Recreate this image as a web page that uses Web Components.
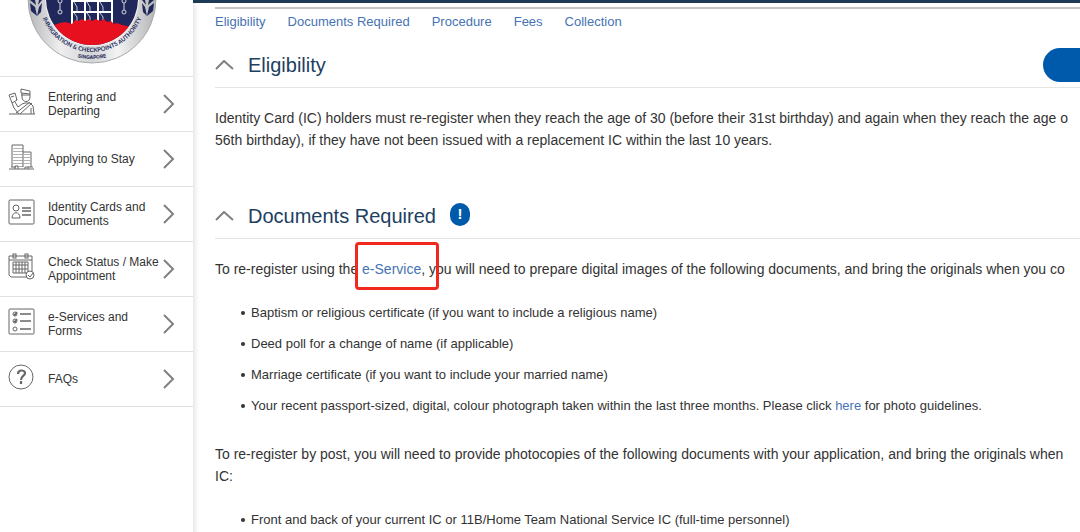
<!DOCTYPE html>
<html lang="en">
<head>
<meta charset="utf-8">
<meta name="viewport" content="width=device-width, initial-scale=1">
<title>Identity Card Re-registration</title>
<style>
    body {
        margin: 0;
        background: #fff;
        color: #333;
        font: 14px/22px "Liberation Sans", Arial, sans-serif;
    }

    p {
        margin: 0;
    }

    a {
        color: #4673b3;
        text-decoration: none;
    }

    ul {
        margin: 17px 0 22px;
        padding-left: 26px;
        font-size: 13px;
        line-height: 31px;
        list-style: none;
    }

    ul:last-child {
        margin-bottom: 0;
    }

    li {
        display: flex;
        align-items: center;
        gap: 6px;
    }

    li::before {
        content: "";
        width: 4px;
        height: 4px;
        border-radius: 50%;
        background: #333;
    }
</style>
</head>
<body>

<app-shell>
    <side-menu slot="side">
        <ica-crest slot="logo"></ica-crest>
        <menu-item icon="officer">Entering and Departing</menu-item>
        <menu-item icon="buildings">Applying to Stay</menu-item>
        <menu-item icon="card">Identity Cards and Documents</menu-item>
        <menu-item icon="calendar">Check Status / Make Appointment</menu-item>
        <menu-item icon="forms">e-Services and Forms</menu-item>
        <menu-item icon="question">FAQs</menu-item>
    </side-menu>

    <section-nav></section-nav>

    <info-section id="eligibility" heading="Eligibility">
        <pill-button slot="action"></pill-button>
        <p>Identity Card (IC) holders must re-register when they reach the age of 30 (before their 31st birthday) and again when they reach the age o<br>56th birthday), if they have not been issued with a replacement IC within the last 10 years.</p>
    </info-section>

    <info-section id="documents" heading="Documents Required">
        <alert-badge slot="badge"></alert-badge>
        <p>To re-register using the <mark-box><a href="#e-service">e-Service</a>,</mark-box> you will need to prepare digital images of the following documents, and bring the originals when you co</p>
        <ul>
            <li><span>Baptism or religious certificate (if you want to include a religious name)</span></li>
            <li><span>Deed poll for a change of name (if applicable)</span></li>
            <li><span>Marriage certificate (if you want to include your married name)</span></li>
            <li><span>Your recent passport-sized, digital, colour photograph taken within the last three months. Please click <a href="#photo">here</a> for photo guidelines.</span></li>
        </ul>
        <p>To re-register by post, you will need to provide photocopies of the following documents with your application, and bring the originals when<br>IC:</p>
        <ul>
            <li><span>Front and back of your current IC or 11B/Home Team National Service IC (full-time personnel)</span></li>
        </ul>
    </info-section>
</app-shell>

<script>
const ICONS = {
    officer: `
        <path d="M1 7l6-2 2 7-5 3z M9 11l-1 1 M4 15l2 5 5 6 M7 14l3 5 4-3 3-1h5l3 3 1 8 M24 15l-12 11 M22 14l-14 11 M1 26h26 M23 20v6"/>
        <path d="M13 1l9 2v3l-9-1z M14 5v4c0 6 8 6 8 0V6 M13 7h9 M3 9l3-1"/>`,
    buildings: `
        <path d="M1 26h25 M4 24V2h11v22 M15 9h8v15 M7 26v-3h3v3 M17 26v-2h3v2 M3 24h5 M20 24h5"/>
        <path stroke-dasharray="1 2" d="M6 5v17 M8 5v17 M10 5v19 M12 5v19 M14 5v19 M17 11v12 M19 11v12 M21 11v12"/>`,
    card: `
        <rect x="1" y="2" width="25" height="24" rx="1"/>
        <circle cx="8" cy="10" r="3"/>
        <path d="M4 20c0-7 8-7 8 0z"/>
        <path stroke-width="1.5" d="M14 10h9 M14 13h9 M14 17h9"/>`,
    calendar: `
        <path d="M20 24H3L1 22V3h23v15 M1 7h23"/>
        <rect x="5" y="1" width="3" height="4"/><rect x="17" y="1" width="3" height="4"/>
        <path d="M5 9h15v11H5z M8 9v11 M11 9v11 M14 9v11 M17 9v11 M5 12h15 M5 16h15"/>
        <circle cx="22" cy="22" r="4" fill="#fff"/>
        <path d="M20 22l2 2 3-4"/>`,
    forms: `
        <rect x="1" y="1" width="25" height="25" rx="1"/>
        <circle cx="7" cy="6" r="2"/><circle cx="7" cy="13" r="2"/><circle cx="7" cy="21" r="2"/>
        <path stroke-width="1.5" d="M12 6h11 M12 13h11 M12 21h11 M6 6l1 1 2-3 M6 13l1 1 2-3"/>`,
    question: `
        <circle cx="13" cy="14" r="12"/>
        <path stroke-width="2.2" d="M10 11c0-5 7-4 7-1 0 3-4 3-4 7 M13 18v3"/>`
};

class AppShell extends HTMLElement
{
    constructor()
    {
        super();

        this.attachShadow({mode: 'open'}).innerHTML = `
        <style>
            :host {
                display: grid;
                grid-template-columns: 193px minmax(0, 1fr);
                min-height: 100vh;
            }

            main {
                border-top: 3px solid #1d3b56;
                padding: 4px 0 0 22px;
            }
        </style>

        <slot name="side"></slot>
        <main><slot></slot></main>
        `;
    }
}

class SideMenu extends HTMLElement
{
    constructor()
    {
        super();

        this.attachShadow({mode: 'open'}).innerHTML = `
        <style>
            :host {
                display: block;
                box-shadow: 1px 3px 6px rgba(0, 0, 0, 0.15);
            }

            .logo {
                display: flex;
                justify-content: center;
                height: 76px;
                padding-right: 9px;
                border-bottom: 1px solid #e2e2e2;
            }
        </style>

        <div class="logo"><slot name="logo"></slot></div>
        <nav aria-label="Main"><slot></slot></nav>
        `;
    }
}

class MenuItem extends HTMLElement
{
    connectedCallback()
    {
        this.attachShadow({mode: 'open'}).innerHTML = `
        <style>
            :host {
                display: block;
                border-bottom: 1px solid #e2e2e2;
            }

            a {
                display: grid;
                grid-template-columns: 28px 1fr 12px;
                column-gap: 12px;
                align-items: center;
                height: 54px;
                padding: 0 18px 0 8px;
                color: #333;
                font-size: 12px;
                line-height: 14px;
                text-decoration: none;
            }

            /* long labels may run into the gap before the arrow */
            span {
                margin-right: -12px;
            }

            svg {
                fill: none;
                stroke: #666;
            }

            .icon {
                margin-bottom: 4px;
            }

            .arrow {
                stroke: #808080;
                stroke-width: 2;
            }
        </style>

        <a href="#">
            <svg class="icon" width="28" height="28" viewBox="0 0 28 28" aria-hidden="true">${ICONS[this.getAttribute('icon')]}</svg>
            <span><slot></slot></span>
            <svg class="arrow" width="12" height="20" viewBox="0 0 12 20" aria-hidden="true"><path d="M1 1l9 9-9 9"/></svg>
        </a>
        `;
    }
}

class IcaCrest extends HTMLElement
{
    constructor()
    {
        super();

        this.attachShadow({mode: 'open'}).innerHTML = `
        <style>
            :host {
                display: block;
            }

            text {
                font: bold 6px Lato, "Liberation Sans", sans-serif;
                fill: #242a5c;
                text-anchor: middle;
            }

            .country {
                font: bold 5px Inter, "Liberation Sans", sans-serif;
            }
        </style>

        <svg width="132" height="66" viewBox="26 0 132 66" role="img" aria-label="Immigration and Checkpoints Authority">
            <defs>
                <linearGradient id="metal">
                    <stop offset="0" stop-color="#b5b6b8"/>
                    <stop offset="0.25" stop-color="#eeeeef"/>
                    <stop offset="0.5" stop-color="#d3d4d6"/>
                    <stop offset="0.7" stop-color="#f3f3f3"/>
                    <stop offset="1" stop-color="#b3b4b6"/>
                </linearGradient>
                <clipPath id="disc"><circle cx="92" cy="-1" r="46"/></clipPath>
                <path id="outer" d="M39 -1a53 53 0 0 0 106 0"/>
                <path id="inner" d="M32 -1a60 60 0 0 0 120 0"/>
            </defs>
            <circle cx="92" cy="-1" r="64" fill="url(#metal)" stroke="#a8a9ac"/>
            <circle cx="92" cy="-1" r="47" fill="#f2f2f3"/>
            <g clip-path="url(#disc)">
                <rect x="45" y="-1" width="94" height="48" fill="#20285b"/>
                <path fill="none" stroke="#fff" stroke-width="2" d="M71 1h42 M71 12h42 M72 0v25 M85 0v22 M98 0v22 M112 0v25"/>
                <path fill="none" stroke="#c5c8da" d="M74 2l3 5v4 M87 2l3 5v4 M100 2l3 5v4 M74 13l3 4v4 M87 13l3 4v4 M100 13l3 4v4"/>
                <path fill="#e6101f" d="M40 50V30l17-6 3-1 5-1 4 1 3 1 3-4 3 1 4-2 3 2 4-2 3 2 4-2 4 2 4-2 3 3 4-1 3 3 3-1 5 2 5 1 15 7v20z"/>
                <g fill="none" stroke="#d5d7e3">
                    <circle cx="60" cy="1" r="2"/><path d="M60 3v7"/><circle cx="60" cy="12" r="2"/>
                    <circle cx="124" cy="1" r="2"/><path d="M124 3v7"/><circle cx="124" cy="12" r="2"/>
                </g>
            </g>
            <g fill="#20285b">
                <path d="M30 3l5 4 2 9-6-5z M42 3l-3 4-2 9 4-4z M30 0h5l1 5z M38 5l1-5h3z"/>
                <path d="M154 3l-5 4-2 9 6-5z M142 3l3 4 2 9-4-4z M154 0h-5l-1 5z M146 5l-1-5h-3z"/>
            </g>
            <text><textPath href="#outer" startOffset="50%">IMMIGRATION &amp; CHECKPOINTS AUTHORITY</textPath></text>
            <text class="country"><textPath href="#inner" startOffset="50%">SINGAPORE</textPath></text>
        </svg>
        `;
    }
}

class SectionNav extends HTMLElement
{
    constructor()
    {
        super();

        this.attachShadow({mode: 'open'}).innerHTML = `
        <style>
            :host {
                display: block;
                border-top: 2px solid #c4c4c4;
            }

            nav {
                display: flex;
                gap: 22px;
                padding: 5px 0 13px;
                font-size: 13px;
                line-height: 16px;
            }

            a {
                color: #4673b3;
                text-decoration: none;
            }
        </style>

        <nav aria-label="On this page">
            <a href="#eligibility">Eligibility</a>
            <a href="#documents">Documents Required</a>
            <a href="#procedure">Procedure</a>
            <a href="#fees">Fees</a>
            <a href="#collection">Collection</a>
        </nav>
        `;
    }
}

class InfoSection extends HTMLElement
{
    connectedCallback()
    {
        this.attachShadow({mode: 'open'}).innerHTML = `
        <style>
            :host {
                display: block;
            }

            :host(:not(:last-child)) {
                margin-bottom: 43px;
            }

            header {
                display: flex;
                align-items: center;
                height: 44px;
                margin-bottom: 19px;
                border-bottom: 1px solid #e4e4e4;
            }

            h2 {
                margin: 0;
                font-size: 20px;
                font-weight: normal;
            }

            button {
                display: flex;
                align-items: center;
                gap: 14px;
                padding: 0;
                border: 0;
                background: none;
                color: #21405f;
                font: inherit;
                line-height: 24px;
            }

            svg {
                fill: none;
                stroke: #808080;
                stroke-width: 2;
            }

            slot[name="badge"] {
                display: block;
                margin-left: 14px;
            }

            slot[name="action"] {
                display: block;
                margin-left: auto;
            }
        </style>

        <header>
            <h2>
                <button type="button" aria-expanded="true">
                    <svg width="19" height="10" viewBox="0 0 19 10" aria-hidden="true"><path d="M1 9l8-8 9 8"/></svg>
                    ${this.getAttribute('heading')}
                </button>
            </h2>
            <slot name="badge"></slot>
            <slot name="action"></slot>
        </header>
        <slot></slot>
        `;
    }
}

class AlertBadge extends HTMLElement
{
    constructor()
    {
        super();

        this.attachShadow({mode: 'open'}).innerHTML = `
        <style>
            :host {
                display: flex;
                justify-content: center;
                width: 20px;
                height: 23px;
                margin-bottom: 4px;
                border-radius: 10px;
                background: #005aab;
                color: #fff;
                font-size: 15px;
                font-weight: bold;
                line-height: 22px;
            }
        </style>
        !
        `;
    }
}

class PillButton extends HTMLElement
{
    constructor()
    {
        super();

        this.attachShadow({mode: 'open'}).innerHTML = `
        <style>
            :host {
                display: block;
            }

            /* sits flush with the right edge, so only its left end is round */
            button {
                display: block;
                width: 37px;
                height: 34px;
                border: 0;
                border-radius: 17px 0 0 17px;
                background: #005aab;
            }
        </style>
        <button type="button" aria-label="Apply"></button>
        `;
    }
}

class MarkBox extends HTMLElement
{
    constructor()
    {
        super();

        this.attachShadow({mode: 'open'}).innerHTML = `
        <style>
            :host {
                position: relative;
            }

            :host::after {
                content: "";
                position: absolute;
                inset: -19px -10px -13px -7px;
                border: 3px solid #f0281e;
                border-radius: 4px;
                pointer-events: none;
            }
        </style>
        <slot></slot>
        `;
    }
}

customElements.define('app-shell', AppShell);
customElements.define('side-menu', SideMenu);
customElements.define('menu-item', MenuItem);
customElements.define('ica-crest', IcaCrest);
customElements.define('section-nav', SectionNav);
customElements.define('info-section', InfoSection);
customElements.define('alert-badge', AlertBadge);
customElements.define('pill-button', PillButton);
customElements.define('mark-box', MarkBox);
</script>
</body>
</html>
